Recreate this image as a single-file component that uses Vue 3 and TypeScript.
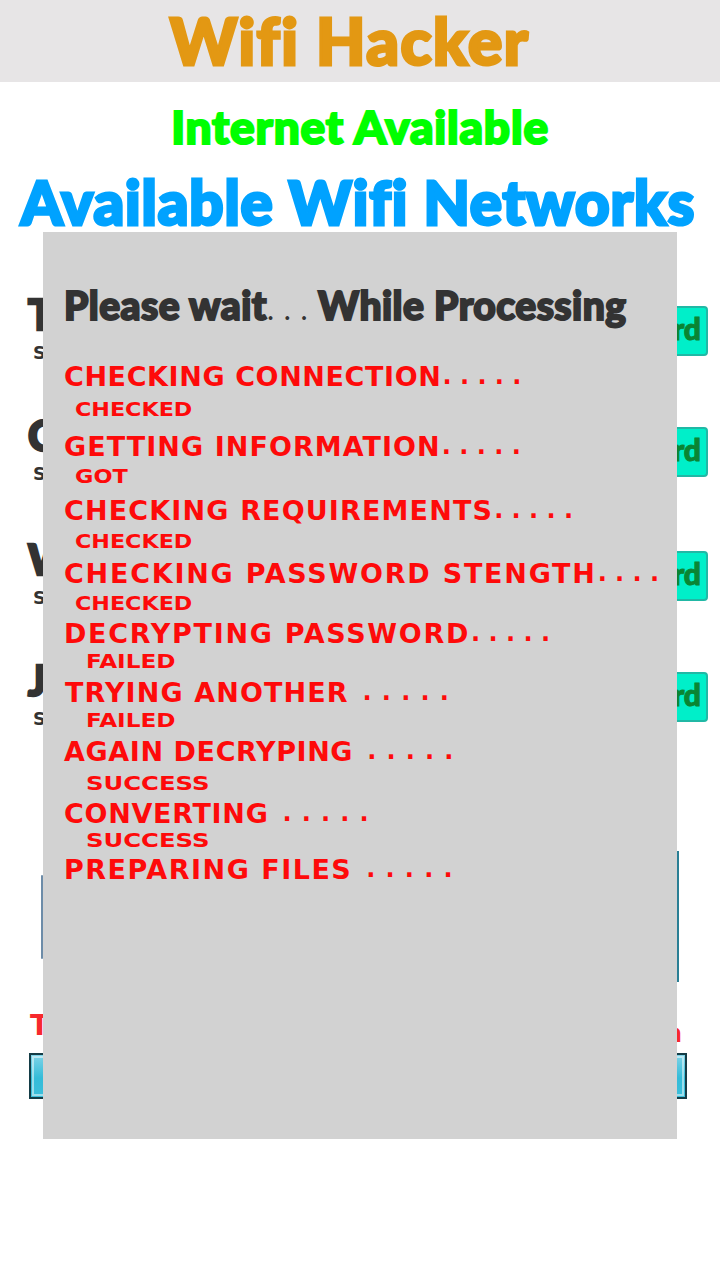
<script setup lang="ts">
interface Net { name: string; sub: string; h: number }
interface Line { label: string; dots: string; sub: boolean; indent: number; gap: number; fit: number; dotGap: number }

const nets: Net[] = [
  { name: 'TP-Link', sub: 'SECURED', h: 121 },
  { name: 'Cisco', sub: 'SECURED', h: 124 },
  { name: 'Wlan', sub: 'SECURED', h: 121 },
  { name: 'Jio', sub: 'SECURED', h: 121 },
]

const lines: Line[] = [
  { label: 'CHECKING CONNECTION', dots: '. . . . .', sub: false, indent: 0, gap: 0, fit: 0.6, dotGap: 1 },
  { label: 'CHECKED', dots: '', sub: true, indent: 11, gap: 7, fit: 1.17, dotGap: 0 },
  { label: 'GETTING INFORMATION', dots: '. . . . .', sub: false, indent: 0, gap: 11, fit: 1.05, dotGap: 1 },
  { label: 'GOT', dots: '', sub: true, indent: 11, gap: 4, fit: 1.18, dotGap: 0 },
  { label: 'CHECKING REQUIREMENTS', dots: '. . . . .', sub: false, indent: 0, gap: 8, fit: 1.15, dotGap: 1 },
  { label: 'CHECKED', dots: '', sub: true, indent: 11, gap: 5, fit: 1.17, dotGap: 0 },
  { label: 'CHECKING PASSWORD STENGTH', dots: '. . . .', sub: false, indent: 0, gap: 6, fit: 1.76, dotGap: 1 },
  { label: 'CHECKED', dots: '', sub: true, indent: 11, gap: 4, fit: 1.17, dotGap: 0 },
  { label: 'DECRYPTING PASSWORD', dots: '. . . . .', sub: false, indent: 0, gap: 4, fit: 1.7, dotGap: 1 },
  { label: 'FAILED', dots: '', sub: true, indent: 22, gap: 2, fit: 1.22, dotGap: 0 },
  { label: 'TRYING ANOTHER', dots: '. . . . .', sub: false, indent: 1, gap: 5, fit: 1.1, dotGap: 14 },
  { label: 'FAILED', dots: '', sub: true, indent: 22, gap: 2, fit: 1.22, dotGap: 0 },
  { label: 'AGAIN DECRYPING', dots: '. . . . .', sub: false, indent: 0, gap: 5, fit: 0.6, dotGap: 14 },
  { label: 'SUCCESS', dots: '', sub: true, indent: 22, gap: 6, fit: 1.28, dotGap: 0 },
  { label: 'CONVERTING', dots: '. . . . .', sub: false, indent: 0, gap: 4, fit: 0.7, dotGap: 14 },
  { label: 'SUCCESS', dots: '', sub: true, indent: 22, gap: 1, fit: 1.28, dotGap: 0 },
  { label: 'PREPARING FILES', dots: '. . . . .', sub: false, indent: 0, gap: 3, fit: 1.5, dotGap: 14 },
]
</script>

<template>
  <div class="page">
    <header class="top"><h1 class="brand">Wifi Hacker</h1></header>
    <h2 class="status">Internet Available</h2>
    <h2 class="heading">Available Wifi Networks</h2>

    <section class="list">
      <div v-for="n in nets" :key="n.name" class="net" :style="{ height: n.h + 'px' }">
        <div class="info">
          <div class="name">{{ n.name }}</div>
          <div class="sec">{{ n.sub }}</div>
        </div>
        <button class="pass">Password</button>
      </div>
    </section>

    <div class="adbox"><span class="adleft"></span></div>
    <p class="warn"><span class="warn-a">This</span><span class="warn-b">Application</span></p>
    <button class="start"><span class="gloss"></span></button>

    <div class="overlay">
      <h3 class="wait">Please wait<span class="thin">. . .</span> While Processing</h3>
      <div class="log">
        <div
          v-for="(l, i) in lines"
          :key="i"
          class="row"
          :style="{ marginTop: l.gap + 'px', paddingLeft: l.indent + 'px' }"
        >
          <span
            :class="l.sub ? 'small' : 'big'"
            :style="l.sub ? { transform: 'scaleX(' + l.fit + ')' } : { letterSpacing: l.fit + 'px' }"
          >{{ l.label }}</span>
          <span
            v-if="l.dots"
            class="dots"
            :class="{ wide: l.dotGap > 1 }"
            :style="{ marginLeft: l.dotGap + 'px' }"
          >{{ l.dots }}</span>
        </div>
      </div>
    </div>
  </div>
</template>

<style scoped>
.page {
  position: relative;
  width: 720px;
  height: 1280px;
  overflow: hidden;
  background: #fff;
  font-family: "Lato", "Open Sans", sans-serif;
}
.top {
  height: 82px;
  background: #e7e5e6;
  display: flex;
  justify-content: center;
  align-items: center;
  padding-right: 21px;
  box-sizing: border-box;
}
.brand {
  margin: 0;
  font-size: 64px;
  line-height: 82px;
  font-weight: 900;
  color: #e39813;
  -webkit-text-stroke: 3px #e39813;
  letter-spacing: 1.5px;
}
.status {
  margin: 0;
  padding-top: 20px;
  height: 76px;
  box-sizing: border-box;
  line-height: 50px;
  text-align: center;
  font-size: 46px;
  font-weight: 900;
  color: #00ff00;
  -webkit-text-stroke: 2.2px #00ff00;
  letter-spacing: 0.8px;
}
.heading {
  margin: 0;
  height: 74px;
  line-height: 88px;
  text-align: center;
  padding-right: 4px;
  font-size: 60px;
  font-weight: 900;
  color: #00a2ff;
  -webkit-text-stroke: 3px #00a2ff;
  letter-spacing: 0.9px;
  white-space: nowrap;
}
.list {
  margin-top: 58px;
}
.net {
  display: flex;
  justify-content: space-between;
  padding: 0 12px 0 28px;
  box-sizing: border-box;
}
.info {
  padding-top: 2px;
}
.name {
  font-size: 42px;
  line-height: 44px;
  font-weight: 900;
  color: #333;
  -webkit-text-stroke: 2.5px #333;
}
.sec {
  margin: 8px 0 0 5px;
  font-family: "DejaVu Sans", sans-serif;
  font-weight: 700;
  font-size: 18px;
  line-height: 18px;
  color: #333;
}
.pass {
  margin-top: 16px;
  width: 150px;
  height: 50px;
  border: 2px solid #21b8a5;
  border-radius: 4px;
  background: #00efc9;
  color: #0a8533;
  font-family: "Lato", sans-serif;
  font-size: 30px;
  font-weight: 900;
  -webkit-text-stroke: 1px #0a8533;
  text-align: right;
  padding: 0 5px 6px 0;
}
.adbox {
  margin: 74px 0 0 41px;
  width: 638px;
  height: 131px;
  box-sizing: border-box;
  border-right: 2px solid #2a7f95;
  display: flex;
  align-items: center;
}
.adleft {
  width: 2px;
  height: 84px;
  border-radius: 2px;
  background: #6d8ca8;
}
.warn {
  margin: 30px 38px 0 30px;
  height: 41px;
  display: flex;
  justify-content: space-between;
  font-family: "DejaVu Sans", sans-serif;
  font-weight: 700;
  font-size: 28px;
  line-height: 28px;
  color: #f7282d;
}
.warn-b {
  margin-top: 8px;
  font-size: 24px;
}
.start {
  position: relative;
  display: block;
  margin-left: 29px;
  width: 658px;
  height: 46px;
  border: 2px solid #143c46;
  background: linear-gradient(#7fd3e7, #34bcd9 55%, #3dbfdb);
  padding: 0;
  overflow: hidden;
}
.gloss {
  position: absolute;
  inset: 1px;
  border: 2px solid rgba(255, 255, 255, 0.5);
}
.overlay {
  position: absolute;
  left: 43px;
  top: 232px;
  width: 634px;
  height: 907px;
  background: #d2d2d2;
  padding: 50px 0 0 21px;
  box-sizing: border-box;
}
.wait {
  margin: 0;
  font-size: 39px;
  line-height: 46px;
  font-weight: 900;
  color: #333;
  -webkit-text-stroke: 2px #333;
  letter-spacing: 0.45px;
  white-space: nowrap;
}
.thin {
  font-weight: 400;
  -webkit-text-stroke: 0;
  font-size: 30px;
  letter-spacing: 1px;
}
.log {
  margin-top: 32px;
}
.row {
  display: flex;
  align-items: center;
  height: 26px;
  white-space: nowrap;
  color: #fe0a0a;
  font-family: "DejaVu Sans", sans-serif;
}
.big, .small {
  display: inline-block;
  font-weight: 700;
  line-height: 1;
}
.big {
  font-size: 27px;
}
.small {
  font-size: 19px;
  transform-origin: left center;
}
.dots {
  font-size: 24px;
  font-weight: 700;
}
.dots.wide {
  letter-spacing: 0.9px;
}
</style>
